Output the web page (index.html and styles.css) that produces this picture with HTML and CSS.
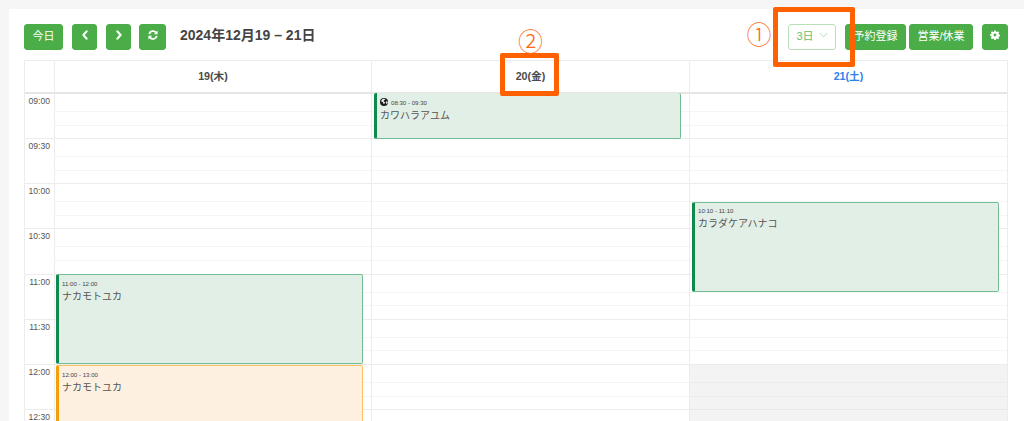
FILE: index.html
```html
<!DOCTYPE html>
<html lang="ja">
<head>
<meta charset="utf-8">
<title>予約カレンダー</title>
<link rel="stylesheet" href="styles.css">
</head>
<body>
<main class="panel">
  <header class="toolbar">
    <button class="btn btn-today">今日</button>
    <button class="btn btn-nav" aria-label="前へ"><svg viewBox="0 0 10 12" width="8" height="10"><path d="M7 1.500 3 6l4 4.500" fill="none" stroke="#fff" stroke-width="2.600" stroke-linecap="round" stroke-linejoin="round"/></svg></button>
    <button class="btn btn-nav btn-next" aria-label="次へ"><svg viewBox="0 0 10 12" width="8" height="10"><path d="M3 1.500 7 6l-4 4.500" fill="none" stroke="#fff" stroke-width="2.600" stroke-linecap="round" stroke-linejoin="round"/></svg></button>
    <button class="btn btn-refresh" aria-label="更新"><svg viewBox="0 0 12 12" width="10" height="10"><path d="M1.500 5A4.600 4.600 0 0 1 9.500 2.900M10.500 7A4.600 4.600 0 0 1 2.500 9.100" fill="none" stroke="#fff" stroke-width="2.200"/><path d="M11.500 .5V5H7ZM.5 11.500V7H5Z" fill="#fff"/></svg></button>
    <h1 class="title">2024年12月19 – 21日</h1>
    <div class="toolbar-right">
      <button class="select">3日<svg viewBox="0 0 10 6" width="9" height="6"><path d="M1 1l4 4 4-4" fill="none" stroke="#a9d6a8" stroke-width="1"/></svg></button>
      <button class="btn btn-book">予約登録</button>
      <button class="btn btn-hours">営業/休業</button>
      <button class="btn btn-gear" aria-label="設定"><svg viewBox="0 0 12 12" width="10" height="10"><path fill="#fff" fill-rule="evenodd" d="M5 .5h2l.3 1.500 1 .4L9.600 1.600 11 3l-.8 1.300.4 1 1.400.3v1.800l-1.400.3-.4 1 .8 1.300L9.600 11l-1.300-.8-1 .4-.3 1.400H5l-.3-1.400-1-.4-1.300.8L1 9.600l.8-1.300-.4-1L0 7V5.200l1.400-.3.4-1L1 2.600 2.400 1.600l1.300.8 1-.4ZM6 4.300a1.700 1.700 0 1 0 0 3.400 1.700 1.700 0 0 0 0-3.400Z"/></svg></button>
    </div>
  </header>

  <section class="calendar">
    <div class="head head-corner"></div>
    <div class="head">19(木)</div>
    <div class="head">20(金)</div>
    <div class="head head-sat">21(土)</div>

    <div class="times">
      <div class="time">09:00</div><div class="time">09:30</div><div class="time">10:00</div><div class="time">10:30</div>
      <div class="time">11:00</div><div class="time">11:30</div><div class="time">12:00</div><div class="time">12:30</div>
    </div>

    <div class="day">
      <div class="slot"><i></i><i></i><i></i></div><div class="slot"><i></i><i></i><i></i></div><div class="slot"><i></i><i></i><i></i></div><div class="slot"><i></i><i></i><i></i></div>
      <div class="slot"><i></i><i></i><i></i></div><div class="slot"><i></i><i></i><i></i></div><div class="slot"><i></i><i></i><i></i></div><div class="slot"><i></i><i></i><i></i></div>
      <article class="event event-green ev-thu-1"><p class="ev-time">11:00 - 12:00</p><p class="ev-name">ナカモトユカ</p></article>
      <article class="event event-orange ev-thu-2"><p class="ev-time">12:00 - 13:00</p><p class="ev-name">ナカモトユカ</p></article>
    </div>

    <div class="day">
      <div class="slot"><i></i><i></i><i></i></div><div class="slot"><i></i><i></i><i></i></div><div class="slot"><i></i><i></i><i></i></div><div class="slot"><i></i><i></i><i></i></div>
      <div class="slot"><i></i><i></i><i></i></div><div class="slot"><i></i><i></i><i></i></div><div class="slot"><i></i><i></i><i></i></div><div class="slot"><i></i><i></i><i></i></div>
      <article class="event event-green ev-fri-1"><p class="ev-time"><svg class="globe" viewBox="0 0 12 12" width="8" height="8"><circle cx="6" cy="6" r="6" fill="#1c1c1c"/><path d="M3.500 1.500 6.500 1 8 2.500 6 3.500 5.500 5 7.500 6.500 6.500 9 5 8.500 4.500 6.500 1.500 5ZM9.500 5l2 .5-.3 2.500-1.700 1-1-2.500Z" fill="#e8e8e8"/></svg>08:30 - 09:30</p><p class="ev-name">カワハラアユム</p></article>
    </div>

    <div class="day day-sat">
      <div class="slot"><i></i><i></i><i></i></div><div class="slot"><i></i><i></i><i></i></div><div class="slot"><i></i><i></i><i></i></div><div class="slot"><i></i><i></i><i></i></div>
      <div class="slot"><i></i><i></i><i></i></div><div class="slot"><i></i><i></i><i></i></div><div class="slot slot-off"><i></i><i></i><i></i></div><div class="slot slot-off"><i></i><i></i><i></i></div>
      <article class="event event-green ev-sat-1"><p class="ev-time">10:10 - 11:10</p><p class="ev-name">カラダケアハナコ</p></article>
    </div>
  </section>
</main>

<div class="mark mark-one"></div>
<div class="mark mark-two"></div>
<span class="num num-one">①</span>
<span class="num num-two">②</span>
</body>
</html>
```

FILE: styles.css
```css
* { box-sizing: border-box; }
html, body { margin: 0; height: 421px; overflow: hidden; }
body {
  background: #f6f6f6;
  font-family: "Liberation Sans", "Noto Sans CJK JP", sans-serif;
  color: #444;
  position: relative;
}
p, h1 { margin: 0; }

.panel {
  margin: 9px 0 0 9px;
  padding: 15px 16px 0 15px;
  background: #fff;
  height: 412px;
}

.toolbar { display: flex; align-items: center; height: 26px; margin-bottom: 10px; }
.toolbar-right { margin-left: auto; display: flex; align-items: center; }

.btn, .select {
  height: 26px;
  padding: 0 0 4px;
  border-radius: 3px;
  font-family: inherit;
  font-size: 11px;
  display: flex;
  align-items: center;
  justify-content: center;
}
.btn { background: #4bad48; border: 1px solid #4bad48; color: #fff; }
.btn-today { width: 39px; }
.btn-nav { width: 25px; margin-left: 9px; }
.btn-next { margin-left: 9px; }
.btn-refresh { width: 27px; margin-left: 8px; }
.title { font-size: 14px; font-weight: 700; color: #444; margin: 0 0 7px 14px; }

.select {
  width: 48px;
  background: #fff;
  border: 1px solid #b9dfb8;
  color: #6dbb6b;
  gap: 5px;
}
.btn-book { width: 61px; margin-left: 9px; }
.btn-hours { width: 64px; margin-left: 3px; }
.btn-gear { width: 26px; margin-left: 9px; }

.calendar {
  display: grid;
  grid-template-columns: 29px 317px 318px 1fr;
  grid-template-rows: 33px auto;
  border-top: 1px solid #ececec;
  border-left: 1px solid #ececec;
  border-right: 1px solid #ececec;
}
.head {
  display: flex;
  align-items: center;
  justify-content: center;
  padding-bottom: 2px;
  font-size: 10.700px;
  font-weight: 700;
  color: #4a4a4a;
  border-bottom: 2px solid #e6e6e6;
  border-left: 1px solid #ececec;
}
.head-corner { border-left: 0; }
.head-sat { color: #2f80ed; }

.times { display: flex; flex-direction: column; }
.time {
  height: 45.170px;
  padding: 2px 4px 0 0;
  font-size: 8.600px;
  line-height: 10px;
  color: #555;
  text-align: right;
  border-bottom: 1px solid #ececec;
}

.day { position: relative; border-left: 1px solid #ececec; }
.slot { height: 45.170px; display: flex; flex-direction: column; border-bottom: 1px solid #ececec; }
.slot i { display: block; border-bottom: 1px solid #f5f5f5; height: 18px; }
.slot i + i { height: 13.600px; }
.slot i:last-child { border-bottom: 0; flex: 1; }
.slot-off { background: #f3f3f3; border-bottom-color: #e8e8e8; }
.slot-off i { border-bottom-color: #ececec; }

.event {
  position: absolute;
  left: 1px;
  right: 8px;
  padding: 5px 4px 0 3px;
  border: 1px solid;
  border-left-width: 3px;
  border-radius: 2px;
}
.event-green { background: #e2efe6; border-color: #74bd93; border-left-color: #0f8a4c; }
.event-orange { background: #fdf0e0; border-color: #fbc060; border-left-color: #f59e0b; }
.ev-time { font-size: 6.100px; line-height: 8px; color: #444; display: flex; align-items: center; }
.ev-name { font-size: 10px; line-height: 14px; color: #555; margin-top: 2px; }
.globe { margin: -1px 3px 0 0; align-self: flex-start; }

.ev-thu-1 { top: 180px; height: 90px; }
.ev-thu-2 { top: 270.500px; height: 90px; }
.ev-fri-1 { top: -1px; left: 2px; height: 46px; border-top: 0; padding-top: 6px; }
.ev-sat-1 { top: 107.500px; height: 90px; padding-top: 4px; }
.day-sat .event { left: 2px; right: 8.500px; }

.mark { position: absolute; border: 5px solid #ff6100; border-radius: 2px; }
.mark-one { left: 773px; top: 7px; width: 82px; height: 60px; }
.mark-two { left: 500px; top: 53px; width: 59px; height: 43px; }
.num {
  position: absolute;
  font-family: "Noto Sans CJK JP", sans-serif;
  font-size: 25px;
  line-height: 24px;
  font-weight: 300;
  color: #ff6a10;
}
.num-one { left: 746.500px; top: 21px; }
.num-two { left: 518px; top: 28px; }
```
